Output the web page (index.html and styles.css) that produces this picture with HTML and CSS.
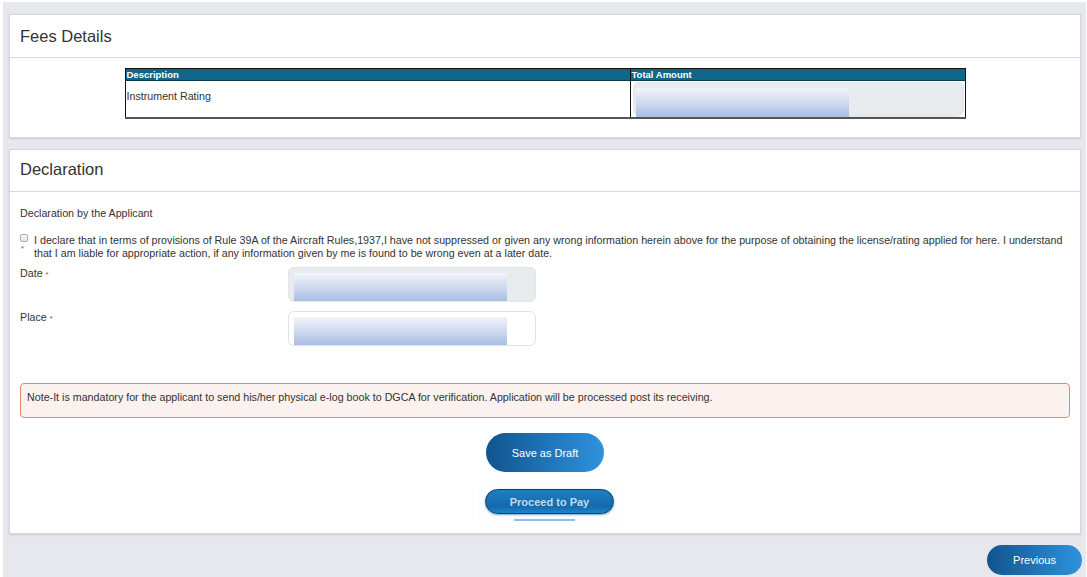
FILE: index.html
```html
<!DOCTYPE html>
<html lang="en">
<head>
<meta charset="utf-8">
<title>Fees Details and Declaration</title>
<link rel="stylesheet" href="styles.css">
</head>
<body>
<div class="page">
  <section class="card fees">
    <div class="card-head">Fees Details</div>
    <div class="card-body fees-body">
      <table class="fee-table">
        <thead>
          <tr><th class="col-desc">Description</th><th>Total Amount</th></tr>
        </thead>
        <tbody>
          <tr>
            <td class="desc">Instrument Rating</td>
            <td class="amount"><div class="field gray short"><span class="redact"></span></div></td>
          </tr>
        </tbody>
      </table>
    </div>
  </section>

  <section class="card decl">
    <div class="card-head">Declaration</div>
    <div class="card-body decl-body">
      <p class="sub">Declaration by the Applicant</p>
      <div class="agree">
        <div class="agree-mark"><span class="cb"></span><span class="req">*</span></div>
        <p class="agree-text">I declare that in terms of provisions of Rule 39A of the Aircraft Rules,1937,I have not suppressed or given any wrong information herein above for the purpose of obtaining the license/rating applied for here. I understand that I am liable for appropriate action, if any information given by me is found to be wrong even at a later date.</p>
      </div>
      <div class="form-row">
        <label class="lbl">Date <span class="req">*</span></label>
        <div class="field gray"><span class="redact"></span></div>
      </div>
      <div class="form-row">
        <label class="lbl">Place <span class="req">*</span></label>
        <div class="field white"><span class="redact"></span></div>
      </div>
      <div class="note">Note-It is mandatory for the applicant to send his/her physical e-log book to DGCA for verification. Application will be processed post its receiving.</div>
      <div class="actions">
        <button class="btn save">Save as Draft</button>
        <div class="pay-shot">
          <button class="pay">Proceed to Pay</button>
          <span class="pay-line"></span>
        </div>
      </div>
    </div>
  </section>

  <div class="footer">
    <button class="btn prev">Previous</button>
  </div>
</div>
</body>
</html>
```

FILE: styles.css
```css
* { box-sizing: border-box; }

html, body {
  margin: 0;
  padding: 0;
  background: #ffffff;
}

body {
  font-family: "Liberation Sans", Arial, sans-serif;
  color: #333333;
  font-size: 10.7px;
}

.page {
  margin: 2px 1px 0 3px;
  padding: 12px 5px 2px 6px;
  background: #e7e8ed;
  min-height: 575px;
}

.card {
  background: #ffffff;
  border: 1px solid #d6d7db;
  box-shadow: 0 1px 2px rgba(0, 0, 0, 0.12);
}

.card + .card { margin-top: 11px; }

.card-head {
  height: 43px;
  line-height: 42px;
  padding: 0 10px;
  font-size: 16.5px;
  color: #333;
  border-bottom: 1px solid #d9d9d9;
}

.decl .card-head {
  height: 42px;
  line-height: 39px;
}

.fees-body {
  padding: 10px 0 18px;
}

.fee-table {
  width: 841px;
  margin: 0 auto;
  border-collapse: collapse;
  border: 1px solid #111;
  border-bottom: 2px solid #555;
}

.fee-table th {
  background: #0e6688;
  color: #fff;
  font-weight: bold;
  font-size: 9.5px;
  text-align: left;
  height: 12px;
  line-height: 11px;
  padding: 0 1px;
  border-bottom: 1px solid #0b3d52;
}

.fee-table th.col-desc { width: 505px; border-right: 1px solid #111; }

.fee-table td {
  height: 36px;
  padding: 0;
  vertical-align: top;
}

.fee-table td.desc {
  padding: 9px 1px 0;
  border-right: 1px solid #111;
  line-height: 12px;
}

.fee-table td.amount {
  padding: 1px 1px 0 2px;
}

.field {
  width: 248px;
  height: 35px;
  border-radius: 6px;
  padding: 5px 0 0 5px;
}

.field.gray {
  background: #e8ebee;
  border: 1px solid #e3e6e9;
}

.field.white {
  background: #ffffff;
  border: 1px solid #e2e2e2;
}

.field.short {
  width: 100%;
  height: 35px;
  padding: 5px 0 0 2px;
  border-radius: 6px 6px 8px 8px;
}

.redact {
  display: block;
  width: 213px;
  height: 28px;
  background: linear-gradient(180deg, #f2f4fb 0%, #d3ddf0 45%, #a8bee3 100%);
}

.field.short .redact { height: 29px; }

.decl-body {
  padding: 15px 10px 12px;
}

.sub {
  margin: 0;
  line-height: 13px;
}

.agree {
  display: flex;
  margin-top: 14px;
}

.agree-mark {
  width: 14px;
  flex: none;
  display: flex;
  flex-direction: column;
  align-items: flex-start;
}

.cb {
  display: block;
  width: 8px;
  height: 8px;
  border: 1px solid #b0b0b0;
  border-radius: 2px;
  background: linear-gradient(180deg, #fbfbfb, #e4e4e4);
}

.agree-mark .req {
  margin: 2px 0 0 1px;
  line-height: 10px;
}

.agree-text {
  margin: 0;
  line-height: 13px;
}

.req {
  color: #e03030;
  font-size: 8px;
}

.form-row {
  display: flex;
  align-items: flex-start;
  margin-top: 7px;
}

.form-row + .form-row { margin-top: 9px; }

.lbl {
  width: 268px;
  flex: none;
  line-height: 13px;
}

.note {
  margin-top: 37px;
  height: 35px;
  padding: 7px 6px 0;
  line-height: 13px;
  background: #fbf1ee;
  border: 1px solid #e6877c;
  border-radius: 4px;
}

.actions {
  display: flex;
  flex-direction: column;
  align-items: center;
  margin-top: 15px;
}

.btn {
  font-family: "Liberation Sans", Arial, sans-serif;
  font-size: 11px;
  color: #ffffff;
  border: 0;
  background: linear-gradient(90deg, #11548f 0%, #2e93dd 100%);
  cursor: pointer;
}

.btn.save {
  width: 118px;
  height: 39px;
  border-radius: 20px;
}

.pay-shot {
  margin: 15px 0 0 10px;
  width: 144px;
  height: 34px;
  background: #fbfdfe;
  display: flex;
  flex-direction: column;
  align-items: flex-start;
  padding: 2px 0 0 7px;
}

.pay {
  width: 129px;
  height: 25px;
  border-radius: 13px;
  border: 1px solid #0b3f6b;
  background: linear-gradient(180deg, #1f7fc3 0%, #1669ab 70%, #1a84c9 100%);
  box-shadow: 0 1px 2px rgba(20, 110, 180, 0.6);
  color: #b9dcf2;
  font-family: "Liberation Sans", Arial, sans-serif;
  font-weight: bold;
  font-size: 11px;
}

.pay-line {
  display: block;
  width: 61px;
  height: 2px;
  margin: 5px 0 0 29px;
  background: #8cbfe8;
}

.footer {
  display: flex;
  justify-content: flex-end;
  padding-top: 11px;
  margin-right: -1px;
}

.btn.prev {
  width: 95px;
  height: 30px;
  border-radius: 15px;
}
```
